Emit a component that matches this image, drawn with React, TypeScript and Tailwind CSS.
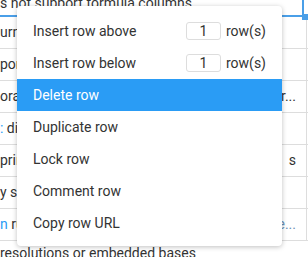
import React from 'react';

const rows = [
  { left: <>urn</>, right: '' },
  { left: <>por</>, right: '' },
  { left: <>ora</>, right: 'r...' },
  { left: <><span className="text-[#2a9cf5]">:</span> di</>, right: '' },
  { left: <>prin</>, right: 's' },
  { left: <>y se</>, right: '' },
  { left: <><span className="text-[#2a9cf5]">n</span> ru</>, right: 'e...' },
];

const items = [
  { label: 'Insert row above', count: true },
  { label: 'Insert row below', count: true },
  { label: 'Delete row', active: true },
  { label: 'Duplicate row' },
  { label: 'Lock row' },
  { label: 'Comment row' },
  { label: 'Copy row URL' },
];

export default function App() {
  return (
    <div className="relative w-[308px] h-[257px] overflow-hidden bg-white text-[14px] text-[#333] font-['Roboto',sans-serif]">
      {/* sheet behind the menu */}
      <div className="flex flex-col">
        <div className="relative h-[17px] flex">
          <div className="flex-1 border-b-2 border-[#4a9fe8] leading-[12px] -mt-[3px] whitespace-nowrap">
            s not support formula columns
          </div>
          <div className="w-[2px] bg-[#4a9fe8]" />
          <div className="w-[4px]" />
          <div className="absolute right-0 top-[14px] w-[6px] h-[6px] bg-[#4a9fe8]" />
        </div>
        {rows.map((r, i) => (
          <div key={i} className="h-[32px] flex border-b border-[#ddd]">
            <div className="flex-1 flex items-center justify-between whitespace-nowrap pr-[10px]">
              <span>{r.left}</span>
              <span className={i === 6 ? 'text-[#6b8fb5]' : ''}>{r.right}</span>
            </div>
            <div className="w-px bg-[#ddd]" />
            <div className="w-[1px]" />
          </div>
        ))}
        <div className="h-[20px] pt-[4px] leading-[16px] whitespace-nowrap">resolutions or embedded bases</div>
      </div>

      {/* context menu */}
      <div className="absolute left-[17px] top-[6px] w-[265px] h-[240px] bg-white rounded-[4px] shadow-[0_1px_5px_rgba(0,0,0,0.25)] pt-[9px] pb-[7px] flex flex-col">
        {items.map((it) => (
          <div
            key={it.label}
            className={`h-[32px] flex items-center justify-between pl-4 pr-4 ${
              it.active ? 'bg-[#2a9cf5] text-white' : ''
            }`}
          >
            <span>{it.label}</span>
            {it.count && (
              <div className="flex items-center gap-[5px]">
                <div className="w-[35px] h-[18px] border border-[#ddd] rounded-[3px] flex items-center justify-center leading-none">
                  1
                </div>
                <span>row(s)</span>
              </div>
            )}
          </div>
        ))}
      </div>
    </div>
  );
}
